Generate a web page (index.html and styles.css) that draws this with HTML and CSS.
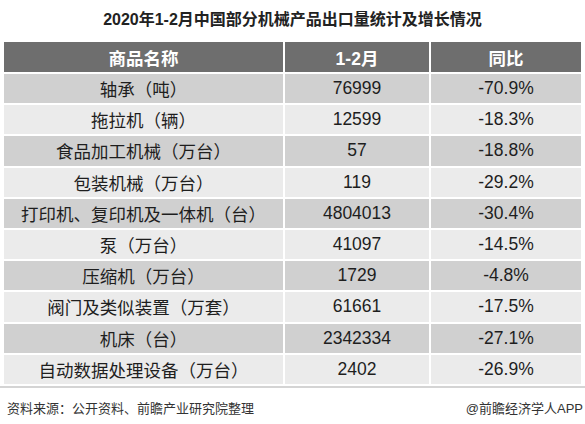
FILE: index.html
```html
<!DOCTYPE html>
<html lang="zh-CN">
<head>
    <meta charset="UTF-8">
    <meta name="viewport" content="width=device-width, initial-scale=1.0">
    <title>2020年1-2月中国部分机械产品出口量统计及增长情况</title>
    <link rel="stylesheet" href="styles.css">
</head>
<body>
    <div class="chart">
        <h1 class="title">2020年1-2月中国部分机械产品出口量统计及增长情况</h1>
        <table class="data">
            <thead>
                <tr>
                    <th class="col_name">商品名称</th>
                    <th class="col_num">1-2月</th>
                    <th class="col_rate">同比</th>
                </tr>
            </thead>
            <tbody>
                <tr><td>轴承（吨）</td><td>76999</td><td>-70.9%</td></tr>
                <tr><td>拖拉机（辆）</td><td>12599</td><td>-18.3%</td></tr>
                <tr><td>食品加工机械（万台）</td><td>57</td><td>-18.8%</td></tr>
                <tr><td>包装机械（万台）</td><td>119</td><td>-29.2%</td></tr>
                <tr><td>打印机、复印机及一体机（台）</td><td>4804013</td><td>-30.4%</td></tr>
                <tr><td>泵（万台）</td><td>41097</td><td>-14.5%</td></tr>
                <tr><td>压缩机（万台）</td><td>1729</td><td>-4.8%</td></tr>
                <tr><td>阀门及类似装置（万套）</td><td>61661</td><td>-17.5%</td></tr>
                <tr><td>机床（台）</td><td>2342334</td><td>-27.1%</td></tr>
                <tr><td>自动数据处理设备（万台）</td><td>2402</td><td>-26.9%</td></tr>
            </tbody>
        </table>
        <div class="footer">
            <span>资料来源：公开资料、前瞻产业研究院整理</span>
            <span>@前瞻经济学人APP</span>
        </div>
    </div>
</body>
</html>
```

FILE: styles.css
```css
body{
    margin: 0;
    background: #fff;
    font-family: "Liberation Sans", "Noto Sans CJK SC", sans-serif;
    color: #222;
}
.chart{
    width: 585px;
    height: 424px;
    overflow: hidden;
}
.title{
    margin: 10px 0 0;
    font-size: 16px;
    line-height: 20px;
    font-weight: bold;
    text-align: center;
    color: #222;
}
.data{
    margin: 12px 0 0 4px;
    width: 577px;
    border-collapse: collapse;
    table-layout: fixed;
    font-size: 17.5px;
}
.data th,
.data td{
    padding: 0;
    text-align: center;
    border-left: 2px solid #fff;
    white-space: nowrap;
}
.data th:first-child,
.data td:first-child{
    border-left: 0;
}
.data th{
    height: 30px;
    background: #6e6e6e;
    color: #fff;
    font-weight: bold;
}
.data td{
    height: 29.2px;
    border-top: 2px solid #fff;
    background: #ebebeb;
    color: #1e1e1e;
}
.data tbody tr:nth-child(odd) td{
    background: #d0d0d0;
}
.col_name{
    width: 279px;
}
.col_num{
    width: 144px;
}
.footer{
    margin-top: 2px;
    border-top: 2px solid #d4d4d4;
    display: flex;
    justify-content: space-between;
    padding: 12px 2px 0 7px;
    font-size: 13px;
    line-height: 18px;
    color: #333;
}
```
